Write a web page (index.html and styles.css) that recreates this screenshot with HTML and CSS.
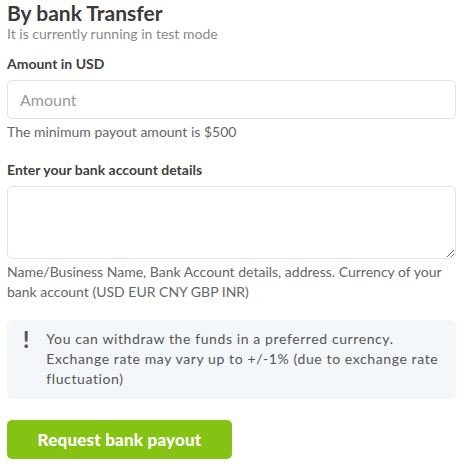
FILE: index.html
```html
<!DOCTYPE html>
<html>
<head>
<meta charset="utf-8">
<link rel="stylesheet" href="styles.css">
</head>
<body>
<div class="page">
  <h1 class="title">By bank Transfer</h1>
  <p class="subtitle">It is currently running in test mode</p>

  <label class="label">Amount in USD</label>
  <input class="input" type="text" placeholder="Amount">
  <p class="help">The minimum payout amount is $500</p>

  <label class="label label-second">Enter your bank account details</label>
  <textarea class="textarea"></textarea>
  <p class="help">Name/Business Name, Bank Account details, address. Currency of your bank account (USD EUR CNY GBP INR)</p>

  <div class="notice">
    <span class="notice-icon">!</span>
    <p class="notice-text">You can withdraw the funds in a preferred currency. Exchange rate may vary up to +/-1% (due to exchange rate fluctuation)</p>
  </div>

  <button class="button" type="button">Request bank payout</button>
</div>
</body>
</html>
```

FILE: styles.css
```css
* { box-sizing: border-box; }
html, body { margin: 0; padding: 0; background: #fff; }
body {
  font-family: Lato, "Open Sans", sans-serif;
  color: #555;
}
.page {
  width: 466px;
  padding: 1px 10px 0 7px;
  display: flex;
  flex-direction: column;
  align-items: flex-start;
}
.title {
  margin: 0;
  font-size: 21px;
  line-height: 24px;
  font-weight: 700;
  color: #3a3a3a;
}
.subtitle {
  margin: 0;
  font-size: 14px;
  line-height: 17px;
  color: #8a8a8a;
}
.label {
  margin-top: 12px;
  font-size: 14px;
  line-height: 20px;
  font-weight: 700;
  color: #3f3f3f;
}
.label-second { margin-top: 18px; }
.input, .textarea {
  width: 100%;
  margin-top: 6px;
  border: 1px solid #dfe4ec;
  border-radius: 5px;
  background: #fff;
  font-family: inherit;
  font-size: 16px;
  color: #555;
  outline: none;
}
.input {
  height: 39px;
  padding: 0 12px;
}
.input::placeholder { color: #9a9a9a; }
.textarea {
  height: 73px;
  margin-top: 6px;
  padding: 8px 12px;
  resize: vertical;
  display: block;
}
.help {
  margin: 3px 0 0;
  font-size: 14px;
  line-height: 20px;
  color: #666;
}
.notice {
  width: 100%;
  margin-top: 18px;
  background: #f4f7fa;
  border-radius: 5px;
  padding: 9px 12px 10px 16px;
  display: flex;
  gap: 17px;
}
.notice-icon {
  font-size: 22px;
  line-height: 22px;
  font-weight: 900;
  color: #555;
  width: 7px;
}
.notice-text {
  margin: 0;
  font-size: 14px;
  line-height: 20px;
  color: #555;
  letter-spacing: 0.6px;
}
.button {
  margin-top: 21px;
  width: 225px;
  height: 39px;
  border: none;
  border-radius: 5px;
  background: #84c214;
  color: #fff;
  font-family: inherit;
  font-size: 17px;
  font-weight: 900;
  letter-spacing: 0.2px;
}
```
